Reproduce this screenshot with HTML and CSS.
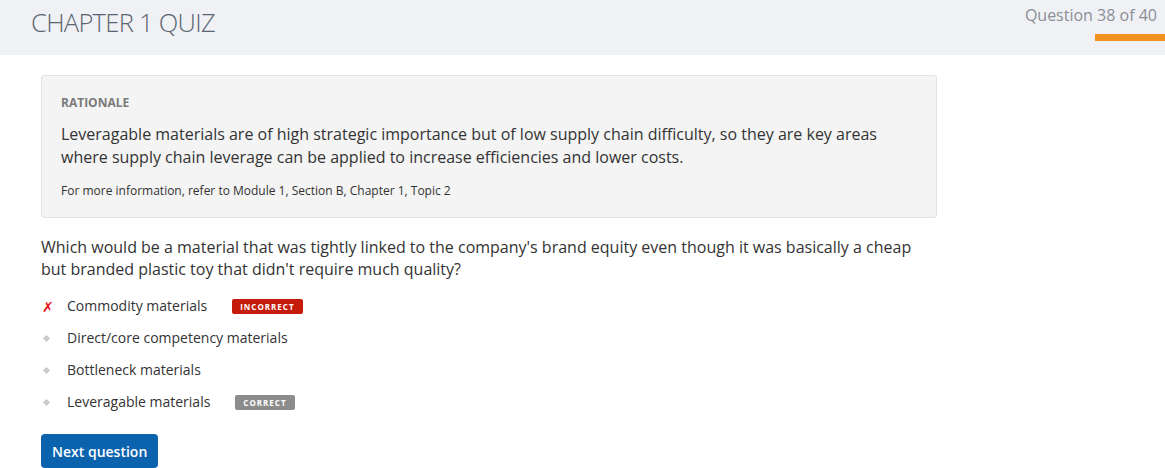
FILE: index.html
```html
<!DOCTYPE html>
<html>
<head>
<meta charset="utf-8">
<link rel="stylesheet" href="styles.css">
</head>
<body>
<header class="top">
  <h1 class="title">CHAPTER 1 QUIZ</h1>
  <div class="progress">
    <div class="progress-label">Question 38 of 40</div>
    <div class="progress-bar"></div>
  </div>
</header>
<main class="content">
  <section class="rationale">
    <h2 class="rationale-head">RATIONALE</h2>
    <p class="rationale-text">Leveragable materials are of high strategic importance but of low supply chain difficulty, so they are key areas where supply chain leverage can be applied to increase efficiencies and lower costs.</p>
    <p class="rationale-ref">For more information, refer to Module 1, Section B, Chapter 1, Topic 2</p>
  </section>
  <p class="question">Which would be a material that was tightly linked to the company's brand equity even though it was basically a cheap but branded plastic toy that didn't require much quality?</p>
  <ul class="options">
    <li class="option"><span class="mark wrong">✗</span><span class="label">Commodity materials</span><span class="badge badge-incorrect">INCORRECT</span></li>
    <li class="option"><span class="mark"><span class="dot"></span></span><span class="label">Direct/core competency materials</span></li>
    <li class="option"><span class="mark"><span class="dot"></span></span><span class="label">Bottleneck materials</span></li>
    <li class="option"><span class="mark"><span class="dot"></span></span><span class="label">Leveragable materials</span><span class="badge badge-correct">CORRECT</span></li>
  </ul>
  <button class="next">Next question</button>
</main>
</body>
</html>
```
FILE: styles.css
```css
* { box-sizing: border-box; }
html, body { margin: 0; padding: 0; }
body {
  font-family: "Open Sans", "Liberation Sans", sans-serif;
  color: #333;
  background: #fff;
  overflow: hidden;
}
.top {
  height: 55px;
  background: #f0f1f5;
  display: flex;
  justify-content: space-between;
  align-items: flex-start;
}
.title {
  margin: 5px 0 0 31px;
  font-weight: 300;
  font-size: 25.5px;
  line-height: 34px;
  color: #5b6570;
  letter-spacing: -0.7px;
}
.progress {
  display: flex;
  flex-direction: column;
  align-items: flex-end;
}
.progress-label {
  margin: 4px 8px 0 0;
  font-size: 16px;
  line-height: 22px;
  color: #8a8f96;
}
.progress-bar {
  margin-top: 8px;
  width: 70px;
  height: 7px;
  background: #f39221;
}
.content {
  padding: 20px 0 0 41px;
  width: 937px;
}
.rationale {
  background: #f4f4f4;
  border: 1px solid #e2e2e2;
  border-radius: 3px;
  padding: 19px 19px 18px 19px;
  height: 143px;
}
.rationale-head {
  margin: 0;
  font-size: 12px;
  font-weight: 700;
  color: #7a7a7a;
  line-height: 16px;
}
.rationale-text {
  margin: 12px 0 0;
  font-size: 16px;
  line-height: 23px;
  color: #333;
}
.rationale-ref {
  margin: 14px 0 0;
  font-size: 12px;
  line-height: 16px;
  color: #333;
}
.question {
  margin: 18px 0 0;
  font-size: 16px;
  line-height: 22px;
  color: #333;
  padding-right: 10px;
}
.options {
  list-style: none;
  margin: 10px 0 0;
  padding: 0;
}
.option {
  display: flex;
  align-items: center;
  height: 32px;
  font-size: 14px;
  color: #333;
}
.mark {
  width: 26px;
  display: flex;
  align-items: center;
  justify-content: flex-start;
}
.wrong {
  color: #e8141a;
  font-size: 14px;
  font-weight: 400;
  padding-left: 1px;
}
.dot {
  display: block;
  width: 5px;
  height: 5px;
  margin-left: 3px;
  background: #cacaca;
  transform: rotate(45deg);
}
.label { line-height: 20px; }
.badge {
  display: inline-block;
  color: #fff;
  font-size: 8px;
  font-weight: 700;
  letter-spacing: 1px;
  line-height: 15px;
  height: 15px;
  padding: 0 8px;
  border-radius: 2px;
}
.badge-incorrect { background: #c41b0a; margin-left: 25px; }
.badge-correct { background: #8c8c8c; margin-left: 25px; }
.next {
  margin-top: 16px;
  background: #0b63ae;
  color: #fff;
  border: none;
  border-radius: 4px;
  font-family: inherit;
  font-size: 14px;
  font-weight: 600;
  height: 34px;
  padding: 0 11px;
}
```
